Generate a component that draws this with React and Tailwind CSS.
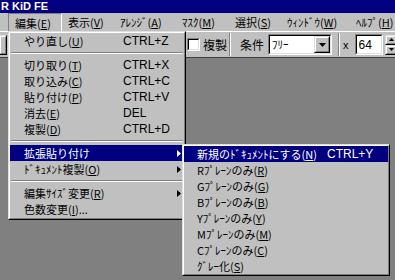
const MAIN_ITEMS = [
  { label: 'やり直し', k: 'U', accel: 'CTRL+Z' },
  'sep',
  { label: '切り取り', k: 'T', accel: 'CTRL+X' },
  { label: '取り込み', k: 'C', accel: 'CTRL+C' },
  { label: '貼り付け', k: 'P', accel: 'CTRL+V' },
  { label: '消去', k: 'E', accel: 'DEL' },
  { label: '複製', k: 'D', accel: 'CTRL+D' },
  'sep',
  { label: '拡張貼り付け', sub: true, active: true },
  { label: 'ﾄﾞｷｭﾒﾝﾄ複製', k: 'O', sub: true },
  'sep',
  { label: '編集ｻｲｽﾞ変更', k: 'R', sub: true },
  { label: '色数変更', k: 'I', tail: '...' },
]

const SUB_ITEMS = [
  { label: '新規のﾄﾞｷｭﾒﾝﾄにする', k: 'N', accel: 'CTRL+Y', active: true },
  { label: 'Rﾌﾟﾚｰﾝのみ', k: 'R' },
  { label: 'Gﾌﾟﾚｰﾝのみ', k: 'G' },
  { label: 'Bﾌﾟﾚｰﾝのみ', k: 'B' },
  { label: 'Yﾌﾟﾚｰﾝのみ', k: 'Y' },
  { label: 'Mﾌﾟﾚｰﾝのみ', k: 'M' },
  { label: 'Cﾌﾟﾚｰﾝのみ', k: 'C' },
  { label: 'ｸﾞﾚｰ化', k: 'S' },
]

const MENUBAR = [
  { label: '編集', k: 'E', w: 'w-[54px]', open: true },
  { label: '表示', k: 'V', w: 'w-[52px]' },
  { label: 'ｱﾚﾝｼﾞ', k: 'A', w: 'w-[62px]' },
  { label: 'ﾏｽｸ', k: 'M', w: 'w-[53px]' },
  { label: '選択', k: 'S', w: 'w-[52px]' },
  { label: 'ｳｨﾝﾄﾞｳ', k: 'W', w: 'w-[69px]' },
  { label: 'ﾍﾙﾌﾟ', k: 'H', w: 'w-[60px]' },
]

function Label({ label, k, tail }) {
  return (
    <span className="whitespace-nowrap">
      {label}
      {k && (
        <>
          (<span className="underline underline-offset-[1px]">{k}</span>)
        </>
      )}
      {tail}
    </span>
  )
}

function Arrow({ white }) {
  return (
    <svg width="4" height="7" viewBox="0 0 4 7" className="shrink-0">
      <path d="M0 0 L4 3.5 L0 7 Z" fill={white ? '#fff' : '#000'} />
    </svg>
  )
}

function Separator() {
  return (
    <div className="h-[8px] flex flex-col justify-center px-[1px]">
      <div className="h-px bg-[#808080]" />
      <div className="h-px bg-white" />
    </div>
  )
}

function PopupFrame({ className, children }) {
  return (
    <div className={`absolute bg-[#c0c0c0] border border-t-[#dfdfdf] border-l-[#dfdfdf] border-r-black border-b-black ${className}`}>
      <div className="border border-t-white border-l-white border-r-[#808080] border-b-[#808080]">
        {children}
      </div>
    </div>
  )
}

function Sunken({ className, children }) {
  return (
    <div className={`shrink-0 border border-t-[#808080] border-l-[#808080] border-r-white border-b-white ${className}`}>
      <div className="h-full border border-t-black border-l-black border-r-[#dfdfdf] border-b-[#dfdfdf] bg-white">
        {children}
      </div>
    </div>
  )
}

function Raised({ className, children }) {
  return (
    <div className={`shrink-0 border border-t-[#dfdfdf] border-l-[#dfdfdf] border-r-black border-b-black ${className}`}>
      <div className="h-full border border-t-white border-l-white border-r-[#808080] border-b-[#808080] bg-[#c0c0c0] flex items-center justify-center">
        {children}
      </div>
    </div>
  )
}

function Etch() {
  return (
    <div className="flex shrink-0 self-stretch my-[1px]">
      <div className="w-px bg-[#808080]" />
      <div className="w-px bg-white" />
    </div>
  )
}

export default function App() {
  return (
    <div className="relative w-[395px] h-[280px] overflow-hidden bg-[#808080] flex flex-col text-[11px] leading-[16px] text-black font-['Noto_Sans_CJK_JP',sans-serif]">
      {/* title bar */}
      <div className="h-[13px] bg-[#000080] text-white font-bold text-[11px] leading-[13px] font-['Liberation_Sans',sans-serif] pl-[1px]">
        R KiD FE
      </div>

      {/* menu bar */}
      <div className="h-[18px] bg-[#c0c0c0] flex pl-[8px] whitespace-nowrap">
        {MENUBAR.map(m => (
          <div
            key={m.label}
            className={`${m.w} shrink-0 h-[18px] pl-[6px] leading-[18px] ${m.open ? 'border border-t-[#808080] border-l-[#808080] border-r-white border-b-0 pl-[5px] leading-[17px]' : ''}`}
          >
            <Label label={m.label} k={m.k} />
          </div>
        ))}
      </div>

      {/* toolbar */}
      <div className="h-[27px] bg-[#c0c0c0] border-t border-t-white border-b border-b-[#404040] flex items-center whitespace-nowrap">
        <Raised className="w-[8px] h-[20px] -ml-[1px]" />
        <div className="w-[178px] shrink-0" />
        <div className="w-px shrink-0 self-stretch bg-white" />
        <Sunken className="w-[13px] h-[13px] ml-[1px]" />
        <span className="ml-[3px] shrink-0 text-[12px]">複製</span>
        <div className="ml-[2px] self-stretch flex shrink-0"><Etch /></div>
        <span className="ml-[9px] shrink-0 text-[12px]">条件</span>
        <Sunken className="w-[64px] h-[21px] ml-[4px]">
          <div className="flex h-full">
            <span className="flex-1 pl-[2px] leading-[17px]">ﾌﾘｰ</span>
            <Raised className="w-[16px] h-[17px]">
              <svg width="7" height="4" viewBox="0 0 7 4">
                <path d="M0 0 H7 L3.5 4 Z" fill="#000" />
              </svg>
            </Raised>
          </div>
        </Sunken>
        <div className="ml-[6px] self-stretch flex shrink-0"><Etch /></div>
        <span className="ml-[3px] shrink-0 font-['Liberation_Sans',sans-serif] text-[11px]">x</span>
        <Sunken className="w-[28px] h-[21px] ml-[6px]">
          <span className="pl-[2px] leading-[17px] text-[12px] font-['Liberation_Sans',sans-serif]">64</span>
        </Sunken>
        <div className="ml-[2px] flex flex-col shrink-0">
          <Raised className="w-[14px] h-[10px]">
            <svg width="5" height="3" viewBox="0 0 5 3"><path d="M0 3 H5 L2.5 0 Z" fill="#000" /></svg>
          </Raised>
          <Raised className="w-[14px] h-[10px]">
            <svg width="5" height="3" viewBox="0 0 5 3"><path d="M0 0 H5 L2.5 3 Z" fill="#000" /></svg>
          </Raised>
        </div>
      </div>

      <div className="flex-1" />

      {/* edit menu */}
      <PopupFrame className="left-[8px] top-[31px] w-[178px]">
        <div className="pb-[1px]">
          {MAIN_ITEMS.map((it, i) =>
            it === 'sep' ? (
              <Separator key={i} />
            ) : (
              <div
                key={i}
                className={`h-[16px] flex items-center pl-[14px] pr-[3px] ${it.active ? 'bg-[#000080] text-white' : ''}`}
              >
                <div className="w-[99px] shrink-0">
                  <Label label={it.label} k={it.k} tail={it.tail} />
                </div>
                <div className="flex-1 text-[12px] font-['Liberation_Sans',sans-serif]">{it.accel}</div>
                {it.sub && <Arrow white={it.active} />}
              </div>
            )
          )}
        </div>
      </PopupFrame>

      {/* submenu */}
      <PopupFrame className="left-[182px] top-[144px] w-[208px]">
        {SUB_ITEMS.map((it, i) => (
          <div
            key={i}
            className={`h-[16px] flex items-center pl-[13px] ${it.active ? 'bg-[#000080] text-white' : ''}`}
          >
            <div className="w-[130px] shrink-0">
              <Label label={it.label} k={it.k} />
            </div>
            <div className="text-[12px] font-['Liberation_Sans',sans-serif]">{it.accel}</div>
          </div>
        ))}
      </PopupFrame>
    </div>
  )
}
